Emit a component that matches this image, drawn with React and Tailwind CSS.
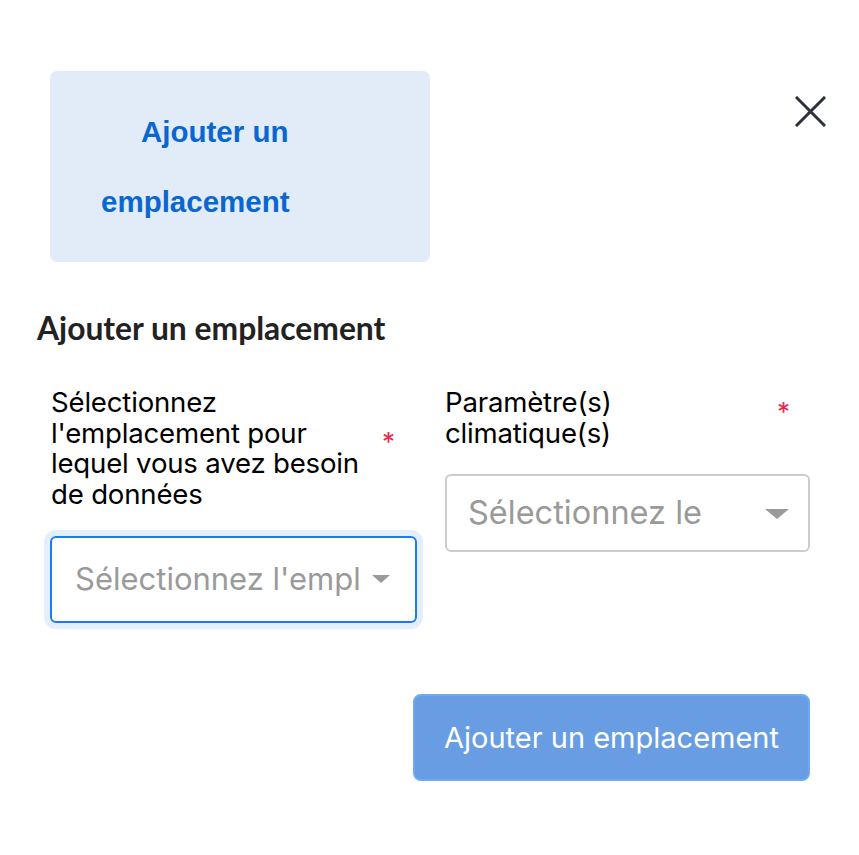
import React from "react";

function Caret({ w, h }) {
  return (
    <svg width={w} height={h} viewBox="0 0 24 10" preserveAspectRatio="none" className="shrink-0">
      <path d="M0 0 L24 0 L12 10 Z" fill="#9a9a9a" />
    </svg>
  );
}

export default function App() {
  return (
    <div className="w-[859px] h-[855px] bg-white font-['Inter',sans-serif] text-black">
      <div className="flex items-start pt-[71px]">
        <div className="ml-[50px] w-[380px] h-[191px] rounded-[7px] bg-[#e1ecf8] pl-[51px] pt-[26px] font-['Liberation_Sans',Arial,sans-serif] font-bold text-[29.5px] leading-[70px] text-[#0a66d0] indent-[40px]">
          Ajouter un
          <br />
          emplacement
        </div>
        <button className="ml-[365px] mt-[25px] w-[31px] h-[31px] flex items-center justify-center">
          <svg width="31" height="31" viewBox="0 0 31 31">
            <path d="M2 2 L29 29 M29 2 L2 29" stroke="#2b323c" strokeWidth="3" strokeLinecap="square" />
          </svg>
        </button>
      </div>

      <h2 className="ml-[37px] mt-[47px] font-['Lato',sans-serif] text-[31.8px] leading-[38px] font-bold text-[#222]">
        Ajouter un emplacement
      </h2>

      <div className="grid grid-cols-[367px_365px] gap-x-[28px] ml-[50px] mt-[40px] items-start">
        <div className="flex flex-col">
          <div className="flex items-center pl-[1px]">
            <div className="flex-1 text-[27.6px] leading-[30.7px] tracking-[-0.2px]">
              Sélectionnez l'emplacement pour lequel vous avez besoin de données
            </div>
            <span className="ml-[8px] mr-[22px] mb-[12px] text-[#e8294a] text-[26px] leading-none">*</span>
          </div>
          <div className="mt-[26px] h-[87px] rounded-[6px] border-2 border-[#1a7cf5] ring-[6px] ring-[#e3effd] flex items-center pl-[23px] pr-[25px]">
            <div className="flex-1 overflow-hidden whitespace-nowrap text-[31px] text-[#9a9a9a]">
              Sélectionnez l'emplacement
            </div>
            <div className="ml-[12px]">
              <Caret w={18} h={8} />
            </div>
          </div>
        </div>

        <div className="flex flex-col">
          <div className="flex items-center">
            <div className="flex-1 text-[27.6px] leading-[30.7px] tracking-[-0.2px]">
              Paramètre(s) climatique(s)
            </div>
            <span className="ml-[8px] mr-[20px] mb-[12px] text-[#e8294a] text-[26px] leading-none">*</span>
          </div>
          <div className="mt-[26px] h-[78px] rounded-[6px] border-2 border-[#cccccc] flex items-start pl-[21px] pr-[19px] overflow-hidden">
            <div className="w-[285px] h-[74px] overflow-hidden pt-[10px] text-[32.5px] leading-[54px] text-[#9a9a9a]">
              Sélectionnez le paramètre
            </div>
            <div className="ml-auto mt-[33px]">
              <Caret w={24} h={10} />
            </div>
          </div>
        </div>
      </div>

      <div className="flex justify-end mr-[49px] mt-[71px]">
        <button className="w-[397px] h-[87px] rounded-[8px] bg-[#689de3] border-2 border-[#6ea8f6] text-white text-[29px]">
          Ajouter un emplacement
        </button>
      </div>
    </div>
  );
}
